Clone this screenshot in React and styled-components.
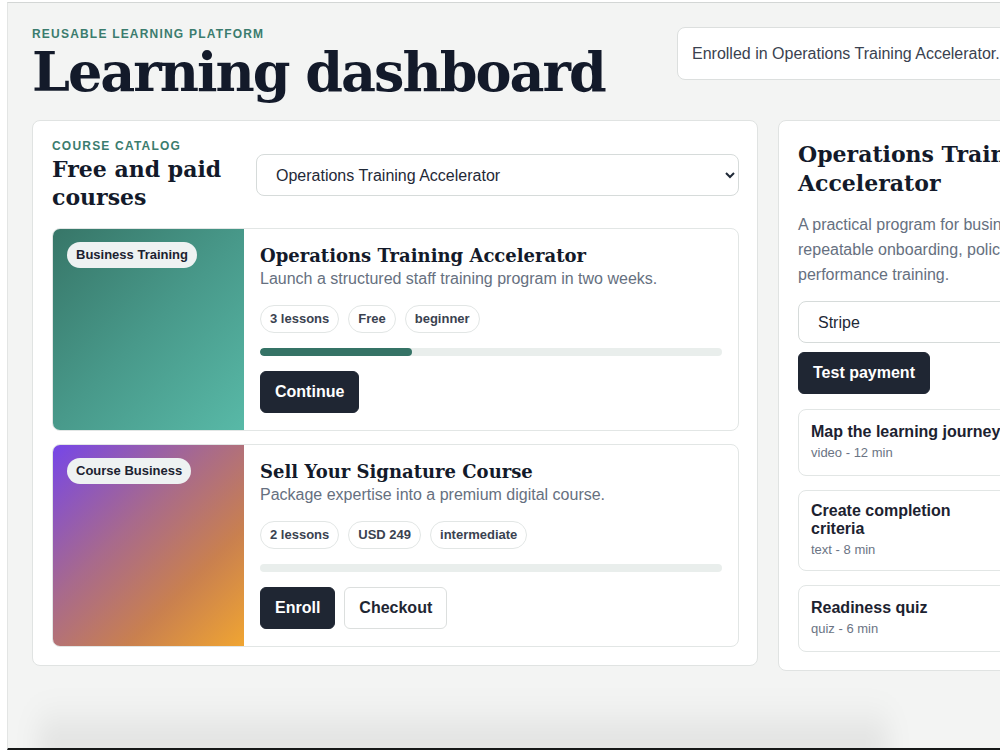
import React, { useState } from "react";
import styled, { createGlobalStyle } from "styled-components";

const GlobalStyle = createGlobalStyle`
  html, body {
    margin: 0;
    padding: 0;
    background: #ffffff;
    overflow: hidden;
  }
  body {
    font-family: "Liberation Sans", Arial, sans-serif;
    color: #1f2937;
  }
  * {
    box-sizing: border-box;
  }
`;

const courses = [
  {
    id: "ops",
    category: "Business Training",
    title: "Operations Training Accelerator",
    summary: "Launch a structured staff training program in two weeks.",
    lessons: 3,
    price: "Free",
    level: "beginner",
    progress: 33,
    enrolled: true,
    cover: "linear-gradient(135deg, #377668 0%, #48998a 50%, #58b9a7 100%)",
  },
  {
    id: "sig",
    category: "Course Business",
    title: "Sell Your Signature Course",
    summary: "Package expertise into a premium digital course.",
    lessons: 2,
    price: "USD 249",
    level: "intermediate",
    progress: 0,
    enrolled: false,
    cover: "linear-gradient(135deg, #7646e8 0%, #a86a8c 40%, #c9804f 70%, #f0a532 100%)",
  },
];

const lessons = [
  { title: "Map the learning journey", kind: "video", minutes: 12 },
  { title: "Create completion criteria", kind: "text", minutes: 8 },
  { title: "Readiness quiz", kind: "quiz", minutes: 6 },
];

export default function App() {
  const [selected, setSelected] = useState("ops");
  const [provider, setProvider] = useState("stripe");
  const active = courses.find((c) => c.id === selected);

  return (
    <>
      <GlobalStyle />
      <Shell>
        <Page>
          <Header>
            <div>
              <Eyebrow>Reusable learning platform</Eyebrow>
              <PageTitle>Learning dashboard</PageTitle>
            </div>
            <Status>Enrolled in Operations Training Accelerator.</Status>
          </Header>

          <Layout>
            <Panel>
              <CatalogHead>
                <CatalogTitle>
                  <Eyebrow>Course catalog</Eyebrow>
                  <SectionTitle>Free and paid courses</SectionTitle>
                </CatalogTitle>
                <Select value={selected} onChange={(e) => setSelected(e.target.value)}>
                  {courses.map((c) => (
                    <option key={c.id} value={c.id}>
                      {c.title}
                    </option>
                  ))}
                </Select>
              </CatalogHead>

              <CourseList>
                {courses.map((c) => (
                  <CourseCard key={c.id}>
                    <Cover $bg={c.cover}>
                      <Badge>{c.category}</Badge>
                    </Cover>
                    <CourseBody>
                      <CourseTitle>{c.title}</CourseTitle>
                      <Summary>{c.summary}</Summary>
                      <Tags>
                        <Tag>{c.lessons} lessons</Tag>
                        <Tag>{c.price}</Tag>
                        <Tag>{c.level}</Tag>
                      </Tags>
                      <Track>
                        <Fill style={{ width: `${c.progress}%` }} />
                      </Track>
                      <Actions>
                        {c.enrolled ? (
                          <Button>Continue</Button>
                        ) : (
                          <>
                            <Button>Enroll</Button>
                            <Button $ghost>Checkout</Button>
                          </>
                        )}
                      </Actions>
                    </CourseBody>
                  </CourseCard>
                ))}
              </CourseList>
            </Panel>

            <Panel>
              <SideTitle>{active.title}</SideTitle>
              <Description>
                A practical program for businesses that need repeatable onboarding, policy, and
                performance training.
              </Description>
              <Select $full value={provider} onChange={(e) => setProvider(e.target.value)}>
                <option value="stripe">Stripe</option>
                <option value="paypal">PayPal</option>
              </Select>
              <PayRow>
                <Button>Test payment</Button>
              </PayRow>
              <LessonList>
                {lessons.map((l) => (
                  <Lesson key={l.title}>
                    <div>
                      <LessonTitle>{l.title}</LessonTitle>
                      <LessonMeta>
                        {l.kind} - {l.minutes} min
                      </LessonMeta>
                    </div>
                    <Button $ghost>Complete</Button>
                  </Lesson>
                ))}
              </LessonList>
            </Panel>
          </Layout>
        </Page>
      </Shell>
    </>
  );
}

const Shell = styled.div`
  position: relative;
  margin: 2px 0 0 7px;
  height: calc(100vh - 2px);
  overflow: hidden;
  background: #f3f4f3;
  border-top: 1px solid #d3d6d5;
  border-left: 1px solid #e3e5e4;
  border-bottom: 2px solid #161818;

  /* soft shade along the lower edge */
  &::after {
    content: "";
    position: absolute;
    left: 30px;
    width: 850px;
    bottom: -10px;
    height: 60px;
    background: linear-gradient(to top, rgba(0, 0, 0, 0.09), rgba(0, 0, 0, 0));
    filter: blur(12px);
    pointer-events: none;
  }
`;

const Page = styled.div`
  width: 1154px;
  padding: 24px 24px 40px;
`;

const Header = styled.header`
  display: flex;
  justify-content: space-between;
  align-items: flex-start;
  margin-bottom: 19px;
`;

const Eyebrow = styled.div`
  font-size: 12px;
  font-weight: 700;
  letter-spacing: 0.1em;
  text-transform: uppercase;
  color: #3b7c6e;
  margin-bottom: 2px;
`;

const PageTitle = styled.h1`
  margin: 1px 0 0;
  font-family: "DejaVu Serif", "Liberation Serif", serif;
  font-weight: 700;
  font-size: 54px;
  line-height: 58px;
  letter-spacing: -2px;
  color: #131a2a;
`;

const Status = styled.div`
  width: 461px;
  height: 53px;
  display: flex;
  align-items: center;
  padding: 0 14px;
  background: #ffffff;
  border: 1px solid #dcdfde;
  border-radius: 8px;
  font-size: 16px;
  color: #3a4250;
  white-space: nowrap;
`;

const Layout = styled.div`
  display: grid;
  grid-template-columns: 726px 360px;
  gap: 20px;
  align-items: start;
`;

const Panel = styled.section`
  background: #ffffff;
  border: 1px solid #e0e3e2;
  border-radius: 8px;
  padding: 18px 18px 18px 19px;
  display: flex;
  flex-direction: column;
`;

const CatalogHead = styled.div`
  display: flex;
  align-items: center;
  gap: 14px;
  margin-bottom: 17px;
`;

const CatalogTitle = styled.div`
  flex: 0 0 190px;
`;

const SectionTitle = styled.h2`
  margin: 2px 0 0;
  font-family: "DejaVu Serif", "Liberation Serif", serif;
  font-weight: 700;
  font-size: 22px;
  line-height: 28px;
  color: #131a2a;
`;

const Select = styled.select`
  flex: ${(p) => (p.$full ? "none" : "1")};
  height: 42px;
  width: ${(p) => (p.$full ? "100%" : "auto")};
  padding: 0 12px 0 15px;
  background: #ffffff;
  border: 1px solid #d6dbda;
  border-radius: 8px;
  font-family: "Liberation Sans", Arial, sans-serif;
  font-size: 16px;
  color: #1f2937;
  outline: none;
`;

const CourseList = styled.div`
  display: flex;
  flex-direction: column;
  gap: 13px;
`;

const CourseCard = styled.article`
  display: grid;
  grid-template-columns: 191px 1fr;
  border: 1px solid #e2e6e5;
  border-radius: 8px;
  overflow: hidden;
  background: #ffffff;
`;

const Cover = styled.div`
  background: ${(p) => p.$bg};
  padding: 13px 14px;
`;

const Badge = styled.span`
  display: inline-block;
  padding: 0 9px;
  height: 26px;
  line-height: 26px;
  border-radius: 999px;
  background: #eef2f2;
  font-size: 13px;
  font-weight: 700;
  color: #1c2230;
`;

const CourseBody = styled.div`
  padding: 15px 16px 17px 16px;
`;

const CourseTitle = styled.h3`
  margin: 0;
  font-family: "DejaVu Serif", "Liberation Serif", serif;
  font-weight: 700;
  font-size: 18px;
  line-height: 24px;
  color: #131a2a;
`;

const Summary = styled.p`
  margin: 0;
  font-size: 16px;
  line-height: 22px;
  color: #667080;
`;

const Tags = styled.div`
  display: flex;
  gap: 9px;
  margin-top: 15px;
`;

const Tag = styled.span`
  height: 28px;
  line-height: 26px;
  padding: 0 9px;
  border: 1px solid #e2e6e5;
  border-radius: 999px;
  font-size: 13px;
  font-weight: 700;
  color: #3a4250;
`;

const Track = styled.div`
  height: 8px;
  margin-top: 15px;
  border-radius: 4px;
  background: #e9eeec;
  overflow: hidden;
`;

const Fill = styled.div`
  height: 100%;
  border-radius: 4px;
  background: #357366;
`;

const Actions = styled.div`
  display: flex;
  gap: 9px;
  margin-top: 15px;
`;

const Button = styled.button`
  height: 42px;
  padding: 0 14px;
  border-radius: 6px;
  border: 1px solid ${(p) => (p.$ghost ? "#dcdfde" : "#1f2633")};
  background: ${(p) => (p.$ghost ? "#ffffff" : "#1f2633")};
  color: ${(p) => (p.$ghost ? "#1f2633" : "#ffffff")};
  font-family: "Liberation Sans", Arial, sans-serif;
  font-size: 16px;
  font-weight: 700;
  cursor: pointer;
  white-space: nowrap;
`;

const SideTitle = styled.h2`
  margin: 1px 0 0;
  font-family: "DejaVu Serif", "Liberation Serif", serif;
  font-weight: 700;
  font-size: 22px;
  line-height: 29px;
  color: #131a2a;
`;

const Description = styled.p`
  margin: 14px 0 14px;
  font-size: 16px;
  line-height: 25px;
  color: #667080;
`;

const PayRow = styled.div`
  display: flex;
  margin-top: 9px;
`;

const LessonList = styled.div`
  display: flex;
  flex-direction: column;
  gap: 14px;
  margin-top: 15px;
`;

const Lesson = styled.div`
  display: grid;
  grid-template-columns: 193px 91px;
  justify-content: space-between;
  align-items: center;
  padding: 11px 12px;
  border: 1px solid #e2e6e5;
  border-radius: 8px;

  ${Button} {
    height: 43px;
  }
`;

const LessonTitle = styled.div`
  font-size: 16px;
  font-weight: 700;
  line-height: 18px;
  color: #1c2230;
`;

const LessonMeta = styled.div`
  margin-top: 3px;
  font-size: 13px;
  line-height: 18px;
  color: #6b7484;
`;
